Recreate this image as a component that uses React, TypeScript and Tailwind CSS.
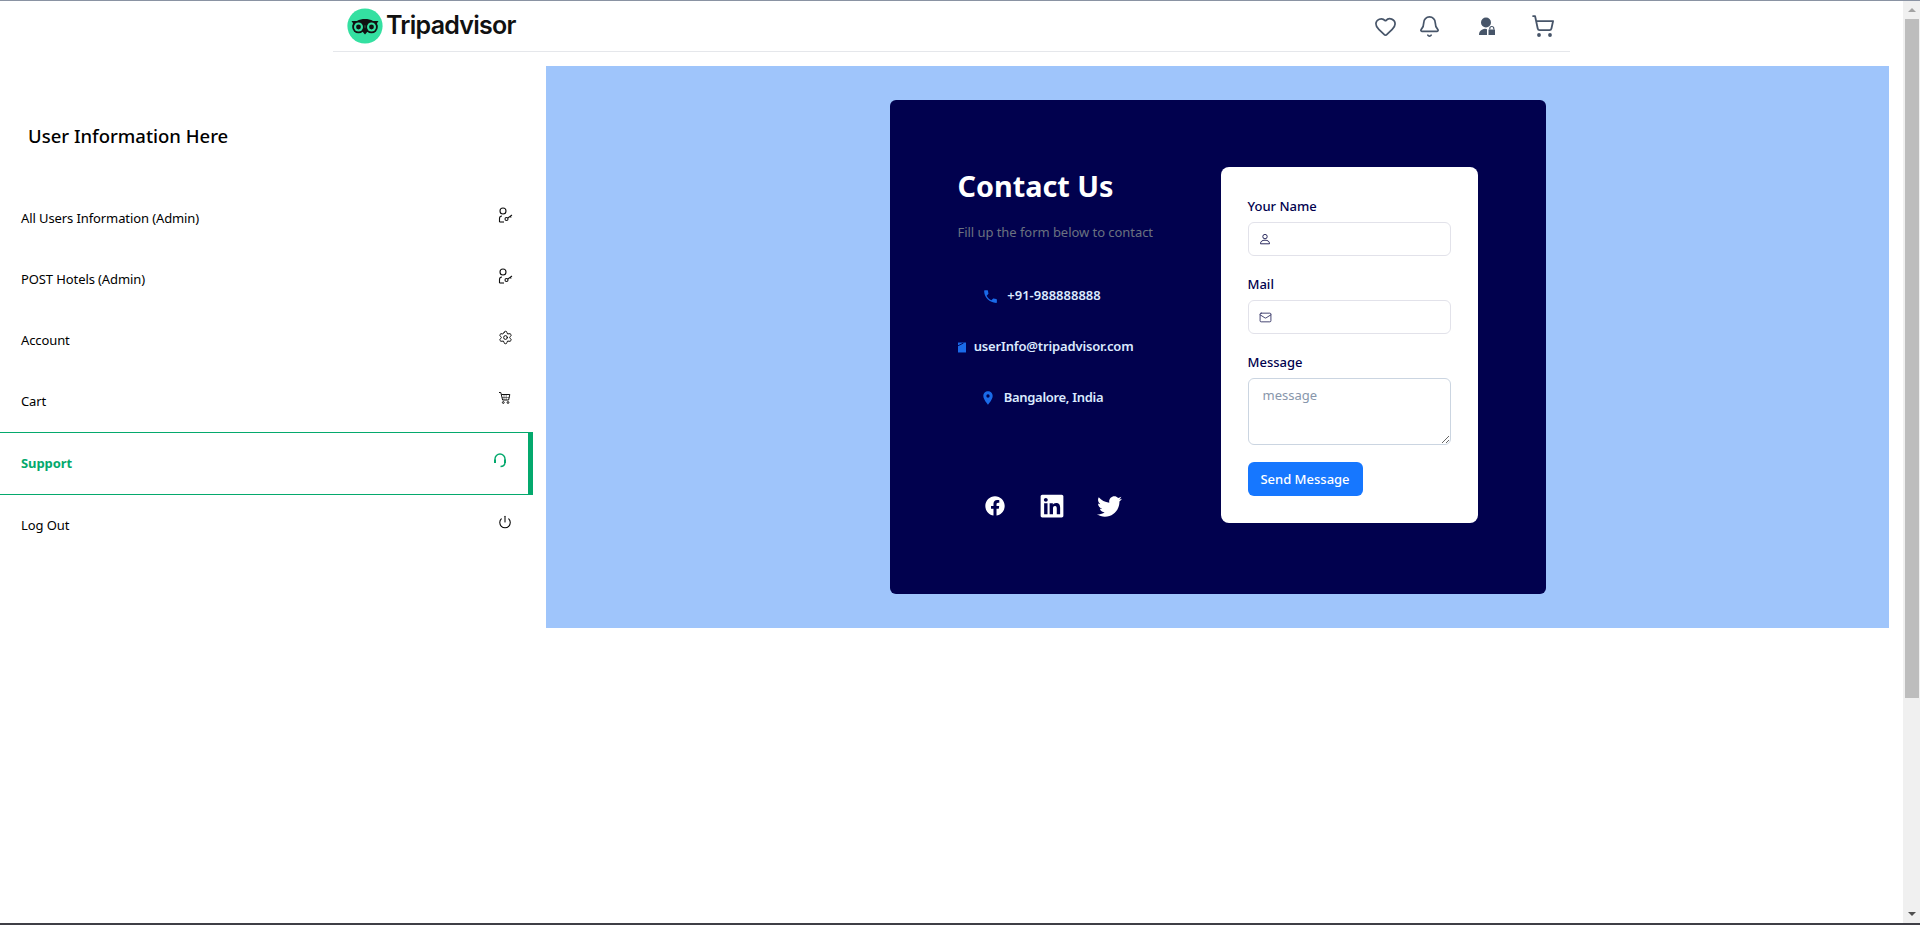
import React from "react";
import { Bell, Heart, Mail, Power, Settings, ShoppingCart } from "lucide-react";
import { FaFacebook, FaLinkedin, FaTwitter } from "react-icons/fa";
import { MdLocationOn, MdPhone } from "react-icons/md";

function UserKey() {
  return (
    <svg width="16" height="16" viewBox="0 0 16 16" fill="none" stroke="#111" strokeWidth="1.1">
      <circle cx="6" cy="4" r="3" />
      <path d="M2.500 15V11.500c0-1.500 1-2.500 2.500-2.500" />
      <path d="M2.500 15h4.500" />
      <circle cx="9.500" cy="12" r="1.500" />
      <path d="M10.800 11l4.200-3M13.200 9.300l1 1.200" />
    </svg>
  );
}

function SmallCart() {
  return (
    <svg width="14" height="14" viewBox="0 0 14 14" fill="none" stroke="#111" strokeWidth="1">
      <path d="M1 1.500h1.800l1.800 7.500h6l1.200-5.500H3.400" />
      <path d="M6 4v5M8.200 4v5M4 6.500h7.500" strokeWidth="0.5" />
      <circle cx="5.300" cy="11.500" r="0.900" />
      <circle cx="10" cy="11.500" r="0.900" />
    </svg>
  );
}

function Headset() {
  return (
    <svg width="14" height="15" viewBox="0 0 14 15" fill="none" stroke="#04a96d" strokeWidth="1.400">
      <path d="M2 7V6a5 5 0 0 1 10 0v1" />
      <path d="M12 10c-.4 2.200-2 3.500-4.500 3.500" />
      <path d="M2 6.500v3.500" strokeWidth="2" />
      <path d="M12 6.500v3.500" strokeWidth="2" />
    </svg>
  );
}

function PersonOutline() {
  return (
    <svg width="12" height="12" viewBox="0 0 12 12" fill="none" stroke="#2b2b5e" strokeWidth="1">
      <circle cx="6" cy="3.600" r="2.200" />
      <path d="M1.500 10.800c0-2.400 1.600-3.600 4.500-3.600s4.500 1.200 4.500 3.600z" />
    </svg>
  );
}

function PersonLock({ className }: { className?: string }) {
  return (
    <svg className={className} width="18" height="19" viewBox="0 0 18 19" fill="#475569">
      <circle cx="8" cy="5.500" r="5" />
      <path d="M1 18c0-3.500 2.200-5.800 6-6.200 1 0 1.700.2 2 .5v5.700z" />
      <path d="M10.500 12.500h6.500V18h-6.500z" />
      <path d="M11.800 12.500v-1a2 2 0 0 1 4 0v1" fill="none" stroke="#475569" strokeWidth="1.200" />
    </svg>
  );
}

function EmailDoc() {
  return (
    <svg width="9" height="11" viewBox="0 0 9 11">
      <path d="M0 0h9v11H0z" fill="#1a6ae8" />
      <path d="M0 3.600L6 .6" stroke="#01014e" strokeWidth="1" fill="none" />
    </svg>
  );
}

function OwlLogo() {
  return (
    <svg width="36" height="36" viewBox="0 0 36 36">
      <circle cx="18" cy="18" r="17.600" fill="#34e0a1" />
      <path d="M4.500 13h5.500c2.400-1.400 5-2 8-2s5.600.6 8 2h5.500c-.8 1-1.400 2.200-1.800 3.400L18 17.500 6.300 16.400C5.900 15.200 5.300 14 4.500 13z" fill="#111" />
      <path d="M15 23l3 3.600 3-3.600-3-4z" fill="#111" />
      <circle cx="11.500" cy="19" r="6.300" fill="#111" />
      <circle cx="24.500" cy="19" r="6.300" fill="#111" />
      <circle cx="11.500" cy="19" r="4.500" fill="#34e0a1" />
      <circle cx="24.500" cy="19" r="4.500" fill="#34e0a1" />
      <circle cx="11.500" cy="19" r="2.400" fill="#111" />
      <circle cx="24.500" cy="19" r="2.400" fill="#111" />
    </svg>
  );
}

const menuItems = [
  { label: "All Users Information (Admin)", icon: <UserKey /> },
  { label: "POST Hotels (Admin)", icon: <UserKey /> },
  { label: "Account", icon: <Settings size={15} color="#000" strokeWidth={1.5} /> },
  { label: "Cart", icon: <SmallCart /> },
  { label: "Support", icon: <Headset />, active: true },
  { label: "Log Out", icon: <Power size={14} color="#000" strokeWidth={1.8} /> },
];

function Header() {
  return (
    <div className="h-[51px] flex justify-center">
      <header className="w-[1237px] h-[51px] border-b border-[#e5e7eb] flex items-center pl-[14px]">
        <OwlLogo />
        <span className="ml-[3px] text-[25px] font-semibold tracking-[-0.75px] text-[#111] font-['Inter',sans-serif]">Tripadvisor</span>
        <div className="ml-auto flex items-center text-[#475569] pr-[15px]">
          <Heart size={23} strokeWidth={1.8} />
          <Bell size={23} strokeWidth={1.8} className="ml-[21px]" />
          <PersonLock className="ml-[37px]" />
          <ShoppingCart size={24} strokeWidth={1.8} className="ml-[35px]" />
        </div>
      </header>
    </div>
  );
}

function Sidebar() {
  return (
    <aside className="w-[533px] shrink-0">
      <h2 className="pl-[28px] pt-[69px] text-[18.5px] font-medium text-black leading-[30px]">User Information Here</h2>
      <nav className="mt-[37px]">
        {menuItems.map((item) => (
          <div
            key={item.label}
            className={
              item.active
                ? "h-[63px] flex items-center justify-between pl-[21px] pr-[18px] border-y border-[#04a96d] border-r-[5px] text-[#04a96d] font-bold"
                : "h-[61px] flex items-center justify-between pl-[21px] pr-[18px] text-black"
            }
          >
            <span className="text-[13px] tracking-[-0.1px]">{item.label}</span>
            <span className="w-[20px] h-[20px] flex items-center justify-center -mt-[7px]">{item.icon}</span>
          </div>
        ))}
      </nav>
    </aside>
  );
}

function Field({ label, icon }: { label: string; icon: React.ReactNode }) {
  return (
    <div className="mb-[18px]">
      <label className="block text-[13px] font-medium text-[#01014e] leading-[20px] mb-[6px]">{label}</label>
      <div className="h-[34px] rounded-md border border-[#e2e2ea] flex items-center pl-[10px]">{icon}</div>
    </div>
  );
}

function ContactCard() {
  return (
    <div className="w-[656px] h-[494px] rounded-md bg-[#01014e] flex pl-[67px] pt-[67px]">
      <div className="w-[264px] pl-[1px]">
        <h1 className="text-[28.8px] font-bold text-white leading-[38px]">Contact Us</h1>
        <p className="mt-[17px] text-[13px] tracking-[-0.05px] text-[#6b7280] leading-[20px] whitespace-nowrap">Fill up the form below to contact</p>
        <div className="w-[176px] mt-[44px] flex flex-col gap-[31px] text-[13px] font-semibold text-[#dbeafe]">
          <div className="h-[20px] pr-[8px] flex items-center justify-center whitespace-nowrap gap-[8px]">
            <MdPhone size={17} color="#1a6ae8" />
            +91-988888888
          </div>
          <div className="h-[20px] flex items-center justify-center whitespace-nowrap gap-[8px] tracking-[-0.15px]">
            <EmailDoc />
            userInfo@tripadvisor.com
          </div>
          <div className="h-[20px] pr-[8px] flex items-center justify-center whitespace-nowrap gap-[8px] tracking-[-0.3px]">
            <MdLocationOn size={16} color="#1a6ae8" />
            Bangalore, India
          </div>
        </div>
        <div className="mt-[85px] flex items-center text-white pl-[27px]">
          <FaFacebook size={20} />
          <FaLinkedin size={26} className="ml-[34px]" />
          <FaTwitter size={25} className="ml-[32px]" />
        </div>
      </div>
      <form className="w-[257px] h-[356px] bg-white rounded-lg px-[27px] pt-[29px]">
        <Field label="Your Name" icon={<PersonOutline />} />
        <Field label="Mail" icon={<Mail size={13} color="#2b2b5e" strokeWidth={1.6} />} />
        <label className="block text-[13px] font-medium text-[#01014e] leading-[20px] mb-[6px]">Message</label>
        <textarea
          placeholder="message"
          className="block w-full h-[67px] rounded-md border border-[#cbd5e1] px-[14px] pt-[7px] text-[13px] text-[#334155] placeholder:text-[#8896ab]"
        />
        <button type="button" className="mt-[17px] w-[115px] h-[34px] pt-[1px] rounded-md bg-[#1677ff] text-white text-[13px] font-medium">
          Send Message
        </button>
      </form>
    </div>
  );
}

function Scrollbar() {
  return (
    <div className="w-[17px] shrink-0 bg-[#f0f0f0] flex flex-col items-center">
      <div className="h-[18px] flex items-center justify-center shrink-0">
        <div className="w-0 h-0 border-x-[4px] border-x-transparent border-b-[4px] border-b-[#a3a3a3]" />
      </div>
      <div className="w-[14px] h-[679px] bg-[#bdbdbd] shrink-0" />
      <div className="mt-auto h-[19px] flex items-center justify-center shrink-0">
        <div className="w-0 h-0 border-x-[4px] border-x-transparent border-t-[4px] border-t-[#505050]" />
      </div>
    </div>
  );
}

export default function App() {
  return (
    <div className="h-[925px] overflow-hidden bg-white flex flex-col font-['Noto_Sans',sans-serif]">
      <div className="h-px bg-[#8a93a3] shrink-0" />
      <div className="flex-1 flex min-h-0">
        <div className="flex-1 min-w-0">
          <Header />
          <div className="flex">
            <Sidebar />
            <main className="ml-[13px] w-[1343px] h-[562px] mt-[14px] bg-[#9fc5fb] flex items-center justify-center">
              <ContactCard />
            </main>
          </div>
        </div>
        <Scrollbar />
      </div>
      <div className="h-[2px] bg-[#3f3f46] shrink-0" />
    </div>
  );
}
